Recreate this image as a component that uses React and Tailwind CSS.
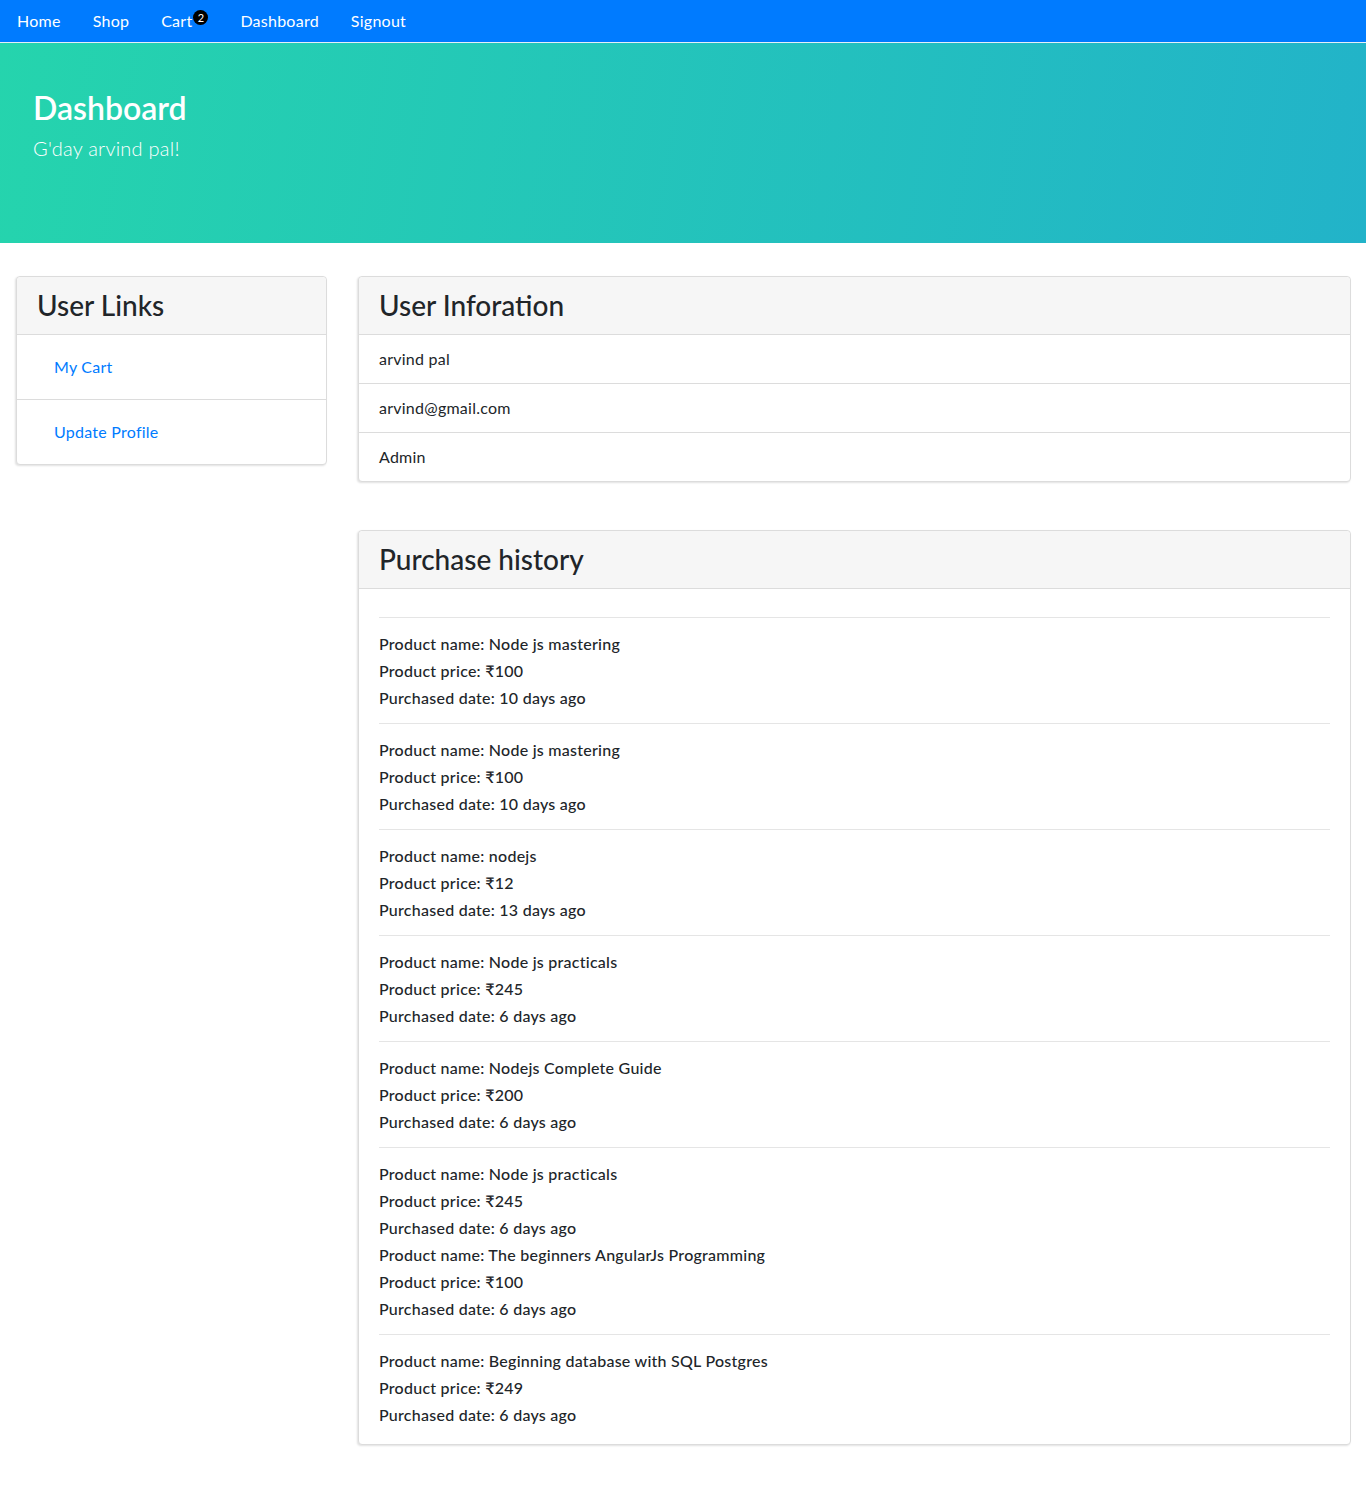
import React from 'react';

const font = { fontFamily: 'Lato, "Noto Sans", sans-serif' };

const history = [
  [{ name: 'Node js mastering', price: 100, date: '10 days ago' }],
  [{ name: 'Node js mastering', price: 100, date: '10 days ago' }],
  [{ name: 'nodejs', price: 12, date: '13 days ago' }],
  [{ name: 'Node js practicals', price: 245, date: '6 days ago' }],
  [{ name: 'Nodejs Complete Guide', price: 200, date: '6 days ago' }],
  [
    { name: 'Node js practicals', price: 245, date: '6 days ago' },
    { name: 'The beginners AngularJs Programming', price: 100, date: '6 days ago' },
  ],
  [{ name: 'Beginning database with SQL Postgres', price: 249, date: '6 days ago' }],
];

const Card = ({ title, children, className = '' }) => (
  <div className={`rounded border border-[#dcdcdc] bg-white shadow-[-1px_1px_2px_rgba(0,0,0,0.12)] ${className}`}>
    <div className="h-[58px] px-5 flex items-center bg-[#f6f6f6] border-b border-[#dcdcdc] rounded-t">
      <h3 className="text-[28px] leading-[1.2] font-medium text-[#212529] tracking-normal">{title}</h3>
    </div>
    {children}
  </div>
);

const NavItem = ({ label, badge }) => (
  <a href="#" className="px-4 py-2 text-white text-base leading-6">
    {label}
    {badge && (
      <span className="relative -top-[5px] ml-[1px] inline-block w-[15px] h-[15px] rounded-full bg-black text-white text-[11px] leading-[15px] text-center align-middle tracking-normal">
        {badge}
      </span>
    )}
  </a>
);

export default function App() {
  return (
    <div style={font} className="min-h-[1494px] bg-white text-[#212529] tracking-[0.25px]">
      {/* Navbar */}
      <nav className="h-[43px] bg-[#007bff] border-b border-[#e6eef8] flex items-center pl-[1px]">
        <NavItem label="Home" />
        <NavItem label="Shop" />
        <NavItem label="Cart" badge="2" />
        <NavItem label="Dashboard" />
        <NavItem label="Signout" />
      </nav>

      {/* Jumbotron */}
      <div className="h-[200px] bg-[linear-gradient(100deg,#25d4ad_0%,#22b3c9_100%)] pt-[46px] px-[33px] text-white">
        <h2 className="text-[32px] leading-[1.2] font-semibold tracking-normal">Dashboard</h2>
        <p className="mt-[6px] text-[20px] font-light leading-[30px]">G'day arvind pal!</p>
      </div>

      {/* Content */}
      <div className="flex px-[16px] pt-[33px] gap-[31px]">
        <div className="w-[311px] shrink-0">
          <Card title="User Links">
            <ul>
              <li className="border-b border-[#dcdcdc]">
                <a href="#" className="block px-[37px] py-5 text-[#007bff] leading-6">My Cart</a>
              </li>
              <li>
                <a href="#" className="block px-[37px] py-5 text-[#007bff] leading-6">Update Profile</a>
              </li>
            </ul>
          </Card>
        </div>

        <div className="flex-1 mr-[-1px]">
          <Card title="User Inforation" className="mb-[48px]">
            <ul>
              <li className="px-5 py-3 leading-6 border-b border-[#dcdcdc]">arvind pal</li>
              <li className="px-5 py-3 leading-6 border-b border-[#dcdcdc]">arvind@gmail.com</li>
              <li className="px-5 py-3 leading-6">Admin</li>
            </ul>
          </Card>

          <Card title="Purchase history">
            <div className="px-5 py-3">
              {history.map((order, i) => (
                <div key={i}>
                  <hr className="my-4 border-t border-[#e5e5e5]" />
                  {order.map((p, j) => (
                    <div key={j}>
                      <h6 className="mb-2 text-base leading-[19px] font-medium">Product name: {p.name}</h6>
                      <h6 className="mb-2 text-base leading-[19px] font-medium">Product price: ₹{p.price}</h6>
                      <h6 className="mb-2 text-base leading-[19px] font-medium">Purchased date: {p.date}</h6>
                    </div>
                  ))}
                </div>
              ))}
            </div>
          </Card>
        </div>
      </div>
    </div>
  );
}
